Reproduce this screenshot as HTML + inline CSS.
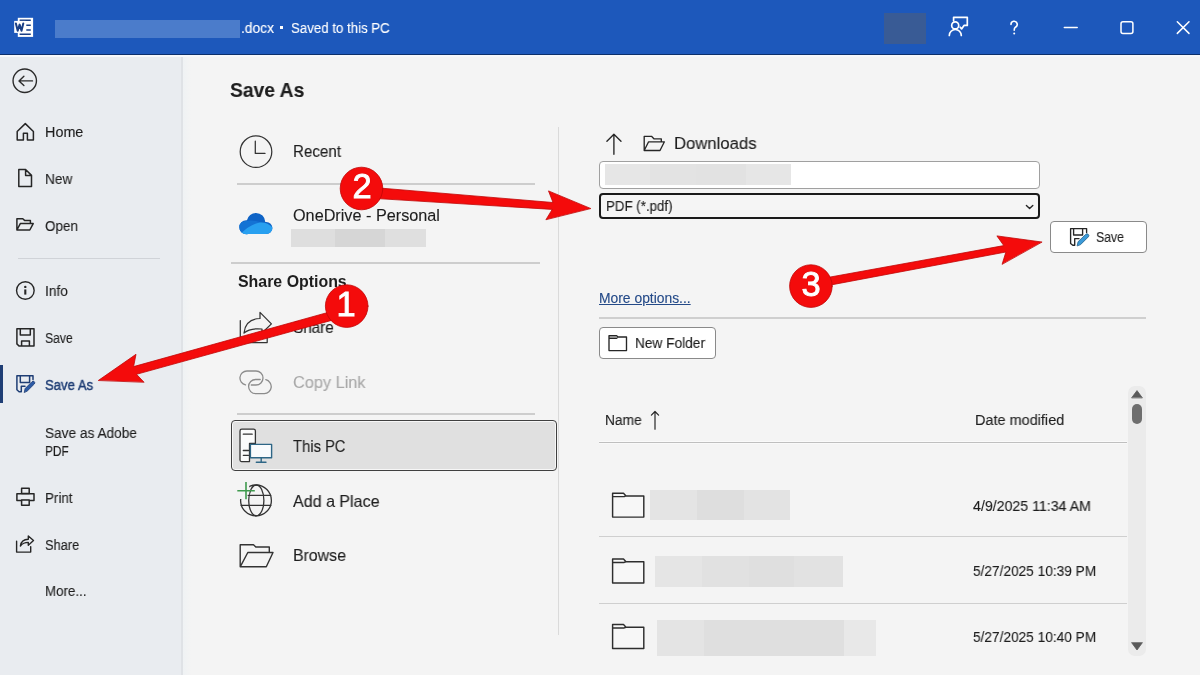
<!DOCTYPE html>
<html><head><meta charset="utf-8">
<style>
*{margin:0;padding:0;box-sizing:border-box}
html,body{width:1200px;height:675px;overflow:hidden;background:#f4f4f4;font-family:"Liberation Sans",sans-serif}
.a{position:absolute}
.t{position:absolute;line-height:1;white-space:nowrap;will-change:transform;-webkit-text-stroke-width:0.12px}
svg.i{position:absolute;overflow:visible}
</style></head><body>
<!-- title bar -->
<div class="a" style="left:0;top:0;width:1200px;height:54px;background:#1d58bb"></div>
<div class="a" style="left:0;top:54px;width:1200px;height:1px;background:#0c2f6b"></div>
<div class="a" style="left:0;top:55px;width:1200px;height:2px;background:#f7f8fa"></div>
<div class="a" style="left:55px;top:20px;width:185px;height:18px;background:#4b7ccb"></div>
<div class="a" style="left:884px;top:13px;width:42px;height:31px;background:#395b95"></div>
<div class="a" style="left:279.5px;top:25.7px;width:3.6px;height:3.6px;background:#ffffff"></div>
<!-- sidebar -->
<div class="a" style="left:0;top:57px;width:182px;height:618px;background:#e9ecf0"></div>
<div class="a" style="left:181px;top:57px;width:2px;height:618px;background:#dfe2e6"></div>
<div class="a" style="left:183px;top:57px;width:8px;height:618px;background:linear-gradient(90deg,#eff2f4,#f4f4f4)"></div>
<div class="a" style="left:17.5px;top:258px;width:142.5px;height:1px;background:#d0d3d8"></div>
<div class="a" style="left:0;top:365px;width:3px;height:38px;background:#1f3e75"></div>
<!-- middle separators -->
<div class="a" style="left:237px;top:183px;width:298px;height:2px;background:#cdcdcd"></div>
<div class="a" style="left:231px;top:262px;width:309px;height:2px;background:#cdcdcd"></div>
<div class="a" style="left:237px;top:413px;width:298px;height:2px;background:#cdcdcd"></div>
<div class="a" style="left:291px;top:229px;width:134.5px;height:17.5px;background:linear-gradient(90deg,#dedede 0.0px,#dedede 44.0px,#d6d6d6 44.0px,#d6d6d6 94.0px,#dfdfdf 94.0px,#dfdfdf 135.0px)"></div>
<div class="a" style="left:231px;top:420px;width:326px;height:51px;background:#e0e0e0;border:1px solid #404040;border-radius:4px;box-shadow:inset 0 0 0 1px #f7f7f7"></div>
<div class="a" style="left:558px;top:127px;width:1px;height:508px;background:#dadada"></div>
<!-- right column -->
<div class="a" style="left:599px;top:161px;width:441px;height:28px;background:#ffffff;border:1px solid #a0a0a0;border-radius:4px"></div>
<div class="a" style="left:605px;top:164px;width:186px;height:21px;background:linear-gradient(90deg,#e6e6e6 0.0px,#e6e6e6 45.0px,#e3e3e3 45.0px,#e3e3e3 91.0px,#e2e2e2 91.0px,#e2e2e2 141.0px,#e6e6e6 141.0px,#e6e6e6 186.0px)"></div>
<div class="a" style="left:599px;top:193px;width:441px;height:26px;background:#f5f5f5;border:2px solid #1a1a1a;border-radius:4px"></div>
<div class="a" style="left:1050px;top:221px;width:97px;height:32px;background:#ffffff;border:1px solid #8a8a8a;border-radius:4px"></div>
<div class="a" style="left:599px;top:317px;width:547px;height:2px;background:#cfcfcf"></div>
<div class="a" style="left:599px;top:327px;width:117px;height:32px;background:#ffffff;border:1px solid #8a8a8a;border-radius:4px"></div>
<div class="a" style="left:599px;top:440.5px;width:528px;height:1px;background:#fafafa"></div><div class="a" style="left:599px;top:442px;width:528px;height:1px;background:#bfbfbf"></div><div class="a" style="left:599px;top:443px;width:528px;height:1px;background:#f9f9f9"></div>
<div class="a" style="left:599px;top:536px;width:528px;height:1px;background:#cfcfcf"></div>
<div class="a" style="left:599px;top:603px;width:528px;height:1px;background:#cfcfcf"></div>
<div class="a" style="left:650px;top:490px;width:140px;height:30px;background:linear-gradient(90deg,#e4e4e4 0.0px,#e4e4e4 47.0px,#dedede 47.0px,#dedede 94.0px,#e3e3e3 94.0px,#e3e3e3 140.0px)"></div>
<div class="a" style="left:655px;top:556px;width:188px;height:31px;background:linear-gradient(90deg,#e5e5e5 0.0px,#e5e5e5 47.0px,#e1e1e1 47.0px,#e1e1e1 94.0px,#dfdfdf 94.0px,#dfdfdf 139.0px,#e2e2e2 139.0px,#e2e2e2 188.0px)"></div>
<div class="a" style="left:657px;top:620px;width:218.5px;height:36px;background:linear-gradient(90deg,#e4e4e4 0.0px,#e4e4e4 47.0px,#dfdfdf 47.0px,#dfdfdf 187.0px,#e8e8e8 187.0px,#e8e8e8 219.0px)"></div>
<!-- scrollbar -->
<div class="a" style="left:1128px;top:386px;width:18px;height:270px;background:#ebebeb;border-radius:7px"></div>
<div class="a" style="left:1132px;top:404px;width:10px;height:20px;background:#6e6e6e;border-radius:5px"></div>
<div class="t" style="left:240.5px;top:20.59px;font-size:14.66px;color:#ffffff;transform:scaleX(0.942);transform-origin:0 0;">.docx</div>
<div class="t" style="left:291.3px;top:20.59px;font-size:14.66px;color:#ffffff;transform:scaleX(0.904);transform-origin:0 0;">Saved to this PC</div>
<div class="t" style="left:45.3px;top:125.12px;font-size:14.39px;color:#1e1e1e;transform:scaleX(0.988);transform-origin:0 0;">Home</div>
<div class="t" style="left:45.3px;top:171.82px;font-size:14.39px;color:#1e1e1e;transform:scaleX(0.945);transform-origin:0 0;">New</div>
<div class="t" style="left:45.3px;top:218.52px;font-size:14.39px;color:#1e1e1e;transform:scaleX(0.932);transform-origin:0 0;">Open</div>
<div class="t" style="left:45.3px;top:284.02px;font-size:14.39px;color:#1e1e1e;transform:scaleX(0.954);transform-origin:0 0;">Info</div>
<div class="t" style="left:45.3px;top:331.12px;font-size:14.39px;color:#1e1e1e;transform:scaleX(0.848);transform-origin:0 0;">Save</div>
<div class="t" style="left:45.3px;top:377.82px;font-size:14.39px;color:#1f3e75;transform:scaleX(0.913);transform-origin:0 0;-webkit-text-stroke:0.45px #1f3e75">Save As</div>
<div class="t" style="left:45.3px;top:425.62px;font-size:14.39px;color:#1e1e1e;transform:scaleX(0.950);transform-origin:0 0;">Save as Adobe</div>
<div class="t" style="left:45.3px;top:443.72px;font-size:14.39px;color:#1e1e1e;transform:scaleX(0.824);transform-origin:0 0;">PDF</div>
<div class="t" style="left:45.3px;top:490.82px;font-size:14.39px;color:#1e1e1e;transform:scaleX(0.933);transform-origin:0 0;">Print</div>
<div class="t" style="left:45.3px;top:537.62px;font-size:14.39px;color:#1e1e1e;transform:scaleX(0.896);transform-origin:0 0;">Share</div>
<div class="t" style="left:45.3px;top:584.12px;font-size:14.39px;color:#1e1e1e;transform:scaleX(0.927);transform-origin:0 0;">More...</div>
<div class="t" style="left:230.1px;top:81.21px;font-size:19.83px;color:#1e1e1e;transform:scaleX(0.972);transform-origin:0 0;font-weight:bold;">Save As</div>
<div class="t" style="left:293.3px;top:144.33px;font-size:16.62px;color:#1e1e1e;transform:scaleX(0.912);transform-origin:0 0;">Recent</div>
<div class="t" style="left:292.6px;top:207.26px;font-size:16.23px;color:#1e1e1e;">OneDrive - Personal</div>
<div class="t" style="left:237.7px;top:273.54px;font-size:15.91px;color:#1e1e1e;font-weight:bold;-webkit-text-stroke-width:0">Share Options</div>
<div class="t" style="left:293px;top:320.16px;font-size:15.64px;color:#1e1e1e;transform:scaleX(0.978);transform-origin:0 0;">Share</div>
<div class="t" style="left:293px;top:374.93px;font-size:16.62px;color:#a9a9a9;transform:scaleX(0.981);transform-origin:0 0;">Copy Link</div>
<div class="t" style="left:293px;top:437.58px;font-size:17.04px;color:#1e1e1e;transform:scaleX(0.866);transform-origin:0 0;">This PC</div>
<div class="t" style="left:293px;top:493.05px;font-size:16.48px;color:#1e1e1e;transform:scaleX(0.974);transform-origin:0 0;">Add a Place</div>
<div class="t" style="left:293px;top:548.43px;font-size:16.62px;color:#1e1e1e;transform:scaleX(0.956);transform-origin:0 0;">Browse</div>
<div class="t" style="left:674px;top:135.33px;font-size:17.04px;color:#1e1e1e;transform:scaleX(0.980);transform-origin:0 0;">Downloads</div>
<div class="t" style="left:605.75px;top:199.53px;font-size:13.97px;color:#1e1e1e;transform:scaleX(0.952);transform-origin:0 0;">PDF (*.pdf)</div>
<div class="t" style="left:599.2px;top:291.66px;font-size:13.87px;color:#244a88;text-decoration:underline;text-underline-offset:1px">More options...</div>
<div class="t" style="left:634.6px;top:336.05px;font-size:14.94px;color:#1e1e1e;transform:scaleX(0.916);transform-origin:0 0;">New Folder</div>
<div class="t" style="left:1095.5px;top:230.32px;font-size:14.39px;color:#1e1e1e;transform:scaleX(0.854);transform-origin:0 0;">Save</div>
<div class="t" style="left:605.1px;top:413.78px;font-size:13.97px;color:#1e1e1e;transform:scaleX(0.985);transform-origin:0 0;">Name</div>
<div class="t" style="left:974.9px;top:413.09px;font-size:14.66px;color:#1e1e1e;transform:scaleX(0.987);transform-origin:0 0;">Date modified</div>
<div class="t" style="left:973.2px;top:498.74px;font-size:14.25px;color:#1e1e1e;transform:scaleX(0.994);transform-origin:0 0;">4/9/2025 11:34 AM</div>
<div class="t" style="left:973.2px;top:564.27px;font-size:14.80px;color:#1e1e1e;transform:scaleX(0.924);transform-origin:0 0;">5/27/2025 10:39 PM</div>
<div class="t" style="left:973.2px;top:629.57px;font-size:14.80px;color:#1e1e1e;transform:scaleX(0.924);transform-origin:0 0;">5/27/2025 10:40 PM</div>
<svg class="i" style="left:0;top:0" width="1200" height="675" viewBox="0 0 1200 675" fill="none" stroke-linecap="round" stroke-linejoin="round">
<!-- Word logo -->
<rect x="17.8" y="17.8" width="15.3" height="19.1" fill="#ffffff"/>
<g stroke="#1a3f86" stroke-width="1.5" stroke-linecap="butt">
<path d="M19.6,20.3H30.8 M26.3,25.3H30.8 M26.3,30H30.8 M19.6,34.2H30.8"/>
</g>
<rect x="14.2" y="20.9" width="11.4" height="12" fill="#ffffff"/>
<path d="M15.9,23.4 L17.7,30.7 L19.6,24.6 L21.5,30.7 L23.3,23.4" stroke="#1a3f86" stroke-width="2"/>
<!-- feedback person -->
<g stroke="#ffffff" stroke-width="1.6">
<path d="M953.6,20.8 V17.3 H967.3 V25.4 H964 L961.6,28.9 L960.2,27.2" stroke-width="1.7"/>
<circle cx="955.2" cy="25.4" r="3.5" stroke-width="1.7"/>
<path d="M949.3,35.5 A6,6 0 0 1 961.3,35.5" stroke-width="1.7"/>
<!-- ? -->
<path d="M1011,24.5 A3.1,3.1 0 1 1 1015.4,27.2 C1014.4,27.9 1014.2,28.6 1014.2,30.3" />
<!-- minimize -->
<path d="M1064.3,27.6 H1077.2" stroke-width="1.5"/>
<!-- maximize -->
<rect x="1121" y="21.7" width="11.9" height="11.9" rx="2" stroke-width="1.5"/>
<!-- close -->
<path d="M1177.3,21.7 L1189,33.4 M1189,21.7 L1177.3,33.4" stroke-width="1.5"/>
</g>
<circle cx="1014.2" cy="33.4" r="1" fill="#ffffff"/>
<!-- back circle -->
<g stroke="#2b2b2b" stroke-width="1.4">
<circle cx="24.75" cy="80.75" r="11.7"/>
<path d="M32.5,80.9 H19 M23.9,76.2 L19,80.9 L23.9,85.6"/>
</g>
<!-- sidebar icons -->
<g stroke="#262626" stroke-width="1.5">
<path d="M17.2,140 V131.5 L25.3,123.6 L33.4,131.5 V140 H27.4 V133.3 H23.4 V140 Z"/>
<path d="M18.8,169.5 H25.6 L31.5,175.4 V186.5 H18.8 Z M25.6,169.5 V175.4 H31.5"/>
<path d="M16.9,230 V218.8 H22.8 L24.8,220.6 H30.4 V223.6 M16.9,230 L20.3,223.6 H33.2 L29.8,230 Z"/>
<circle cx="25.35" cy="290.5" r="8.8" stroke-width="1.4"/>
<path d="M16.9,328.8 H34 V346 H19 L16.9,343.9 Z M20.3,328.8 V335 H30.3 V328.8 M21.6,346 V340.9 H29.4 V346"/>
<rect x="21.6" y="488.3" width="7.6" height="5.3"/>
<rect x="16.9" y="493.8" width="17.1" height="6.7"/>
<rect x="21.6" y="499.9" width="7.6" height="5.4" fill="#e9ecf0"/>
<path d="M16.6,541.3 V552.1 H30.7 V546.6 M20.4,546 C21,541.8 24,539.4 28.3,539.3 V536 L33.5,540.6 L28.3,545.2 V542.4 C24.8,542.4 22.2,543.7 20.4,546 Z" stroke-width="1.4"/>
</g>
<path d="M25.3,289.4 V294.6" stroke="#262626" stroke-width="2.1" stroke-linecap="butt"/>
<circle cx="25.3" cy="286.9" r="1.2" fill="#262626"/>
<!-- save as (blue) -->
<g stroke="#1f3e75" stroke-width="1.5">
<path d="M33,379.6 V375.8 H16.9 V389.7 L19.1,391.7 H21.3 V386.3 H25"/>
<path d="M20.3,375.8 V382.4 H29.6 V375.8"/>
</g>
<path d="M24.3,392.2 L25.1,388.6 L32,381.7 A1.6,1.6 0 0 1 34.3,384 L27.4,390.9 Z" fill="#2d5ba6" stroke="#1f3e75" stroke-width="0.8"/>
<!-- middle column icons -->
<g stroke="#333333" stroke-width="1.25">
<circle cx="256" cy="151.65" r="15.8"/>
<path d="M255.3,141.2 V153.4 H265"/>
<path d="M240.3,320.5 V342.6 H267.2 V334.8"/>
<path d="M244,333 C245,323.5 251,318.8 260,318.5 V312.4 L271.4,323.9 L262,333 V329 C254,328.2 247.5,330 244,333 Z"/>
</g>
<g stroke="#8c8c8c" stroke-width="1.3">
<path d="M245.5,384.85 A7,7 0 0 1 247,371 H256 A7,7 0 0 1 256,385 H251.3"/>
<path d="M265.8,379.7 A7.1,7.1 0 0 1 264.3,393.7 H255.7 A7.1,7.1 0 0 1 255.7,379.5 H260.2"/>
</g>
<!-- this PC -->
<g stroke="#333333" stroke-width="1.3">
<path d="M249.5,461.6 H241.5 A1.5,1.5 0 0 1 240,460.1 V430.9 A1.8,1.8 0 0 1 241.8,429.1 H253.6 A1.8,1.8 0 0 1 255.4,430.9 V443.5 H249.5 V461.6" fill="#fbfbfb"/>
<path d="M243.3,434.2 H252.2 M243.3,450.5 H248.5 M243.3,455.3 H248.5"/>
</g>
<g stroke="#2e6686" stroke-width="1.4">
<rect x="250.4" y="444.4" width="21.2" height="13.4" fill="#f9fbfd"/>
<path d="M261.2,457.8 V462 M256.3,462.2 H266"/>
</g>
<!-- globe -->
<defs><mask id="gm"><rect x="230" y="475" width="50" height="50" fill="#fff"/><path d="M234,478 H249.2 V494.5 H247.6 V499 H234 Z" fill="#000"/></mask></defs>
<g stroke="#333333" stroke-width="1.3" mask="url(#gm)">
<circle cx="256" cy="500.4" r="15.4"/>
<ellipse cx="256.3" cy="500.4" rx="7.6" ry="15.4"/>
<path d="M241,495.3 H270.8 M241.2,505.4 H270.8"/>
</g>
<path d="M246,482 V499.2 M237.3,490.7 H254.8" stroke="#3f9a4e" stroke-width="1.6" stroke-linecap="butt"/>
<!-- browse -->
<path d="M240.2,566.8 V544.7 H253.5 L255.8,547 H269.3 V552.5 M240.2,566.8 L247.8,552.5 H273 L266.3,566.8 Z" stroke="#333333" stroke-width="1.4"/>
<!-- onedrive cloud -->
<defs><clipPath id="cl"><circle cx="256" cy="222.2" r="9.3"/><circle cx="246.3" cy="227.2" r="7"/><circle cx="266.3" cy="228" r="6.1"/><rect x="246" y="226" width="21" height="8"/></clipPath></defs>
<g clip-path="url(#cl)">
<rect x="238" y="211" width="36" height="24" fill="#0e63c6"/>
<path d="M236,224 Q247,219 256,221 Q262,222.5 266,224 L236,236 Z" fill="#1473d4"/>
<path d="M240,234.5 Q250,224 260,222.5 Q268,221.5 275,230 V236 H238 Z" fill="#28a0f0"/>
</g>
</svg>
<svg class="i" style="left:0;top:0" width="1200" height="675" viewBox="0 0 1200 675" fill="none" stroke-linecap="round" stroke-linejoin="round">
<g stroke="#262626" stroke-width="1.35">
<path d="M613.9,134.3 V154.2 M606.9,141.3 L613.9,134.3 L621,141.3"/>
<path d="M644.2,150.5 V136.3 H651.5 L653.9,138.8 H661.3 V141.8 M644.2,150.5 L648.6,141.8 H664.4 L660,150.5 Z"/>
<path d="M1026.4,205.5 L1029.6,208.5 L1032.8,205.5" stroke-width="1.4"/>
<path d="M1086.6,232.6 V228.6 H1070.6 V243.4 L1072.8,245.2 H1074.7 V238.6 H1079"/>
<path d="M1073.6,228.6 V235 H1082.6 V228.6"/>
<path d="M609,350.6 V335.7 H616.6 L618.1,337 H626.5 V350.6 Z M609,338.2 H616.6 L618.1,337"/>
<path d="M655,411.5 V429.2 M651.4,415.1 L655,411.5 L658.6,415.1" stroke-width="1.2"/>
</g>
<path d="M1077.2,245.6 L1078.1,241.7 L1085.7,234.4 A1.8,1.8 0 0 1 1088.3,236.9 L1080.8,244.4 Z" fill="#3b9ad8" stroke="#1f5f8a" stroke-width="0.8"/>
<g stroke="#2e2e2e" stroke-width="1.45">
<path d="M612.6,517.1 V493.2 H623.5 L626,495.9 H643.8 V517.1 Z M612.6,496.6 H624.2 L626,495.9" fill="#f7f7f7"/>
<path d="M612.6,582.9 V559 H623.5 L626,561.7 H643.8 V582.9 Z M612.6,562.4 H624.2 L626,561.7" fill="#f7f7f7"/>
<path d="M612.6,648.4 V624.5 H623.5 L626,627.2 H643.8 V648.4 Z M612.6,627.9 H624.2 L626,627.2" fill="#f7f7f7"/>
</g>
<path d="M1131.8,397.6 L1137,390.6 L1142.2,397.6 Z" fill="#5a5a5a" stroke="#5a5a5a" stroke-width="0.8"/>
<path d="M1131.8,642.9 L1137,650 L1142.2,642.9 Z" fill="#5a5a5a" stroke="#5a5a5a" stroke-width="0.8"/>
<!-- red annotations -->
<g fill="#f40b0b" stroke="#c00606" stroke-width="0.8" stroke-linejoin="miter">
<path d="M98.6,380.3 L136,354.3 L133.6,366.6 L346.7,307.2 L346.7,316.2 L136.5,374.3 L143.8,382 Z"/>
<path d="M590.5,208.4 L548.5,190.9 L553,202.5 L361.5,186.5 L361.5,197.6 L552.2,209.4 L546.1,219.4 Z"/>
<path d="M1041.7,242 L996.9,235.9 L1003.8,245.6 L811,280.5 L811,288.7 L1005.9,252 L1002.2,264 Z"/>
<circle cx="346.7" cy="306.1" r="21.3"/>
<circle cx="361.5" cy="188.5" r="21.3"/>
<circle cx="810.9" cy="286.1" r="21.3"/>
</g>
</svg>
<div class="t" style="left:326.2px;top:286.6px;width:40px;text-align:center;font-size:34.5px;font-weight:normal;color:#fff;-webkit-text-stroke:0.9px #fff;text-shadow:0 0 1.2px rgba(110,0,0,0.7)">1</div>
<div class="t" style="left:341.5px;top:169.4px;width:40px;text-align:center;font-size:34.5px;font-weight:normal;color:#fff;-webkit-text-stroke:0.9px #fff;text-shadow:0 0 1.2px rgba(110,0,0,0.7)">2</div>
<div class="t" style="left:790.9px;top:267px;width:40px;text-align:center;font-size:34.5px;font-weight:normal;color:#fff;-webkit-text-stroke:0.9px #fff;text-shadow:0 0 1.2px rgba(110,0,0,0.7)">3</div>
</body></html>
